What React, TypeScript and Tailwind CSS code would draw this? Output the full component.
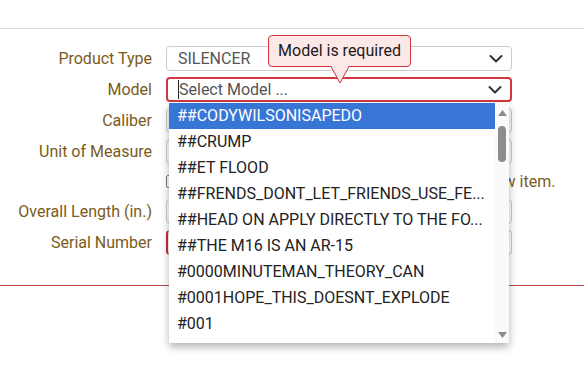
import React from "react";

const Chevron = () => (
  <svg width="14" height="9" viewBox="0 0 14 9" className="absolute right-[8px] top-1/2 -translate-y-1/2">
    <path d="M1.5 1.5 L7 7 L12.5 1.5" fill="none" stroke="#333" strokeWidth="2" strokeLinecap="round" strokeLinejoin="round" />
  </svg>
);

const Label = ({ children }: { children: React.ReactNode }) => (
  <div className="text-right text-[16px] leading-[25px] text-[#7a5b1c] whitespace-nowrap">{children}</div>
);

const items = [
  "##CODYWILSONISAPEDO",
  "##CRUMP",
  "##ET FLOOD",
  "##FRENDS_DONT_LET_FRIENDS_USE_FE...",
  "##HEAD ON APPLY DIRECTLY TO THE FO...",
  "##THE M16 IS AN AR-15",
  "#0000MINUTEMAN_THEORY_CAN",
  "#0001HOPE_THIS_DOESNT_EXPLODE",
  "#001",
];

export default function App() {
  return (
    <div className="relative w-[584px] h-[381px] bg-white overflow-hidden font-['Roboto',sans-serif]">
      <div className="h-[29px] border-b border-[#dedede]" />
      <div className="pt-[17px] grid grid-cols-[152px_346px] gap-x-[14px] gap-y-[6px]">
        <Label>Product Type</Label>
        <div className="relative h-[25px] border border-[#ccc] rounded-[4px] pl-[11px] text-[16px] leading-[23px] text-[#555]">
          SILENCER
          <Chevron />
        </div>

        <Label>Model</Label>
        <div className="relative h-[25px] border-2 border-[#d2363f] rounded-[4px] pl-[10px] text-[16px] leading-[21px] text-[#555]">
          <span className="border-l border-[#222]">Select Model ...</span>
          <Chevron />
        </div>

        <Label>Caliber</Label>
        <div className="relative h-[25px] border border-[#ccc] rounded-[4px]" />

        <Label>Unit of Measure</Label>
        <div className="relative h-[25px] border border-[#ccc] rounded-[4px]" />

        <div />
        <div className="h-[23px] flex items-center gap-[6px] text-[16px] text-[#7a5b1c] whitespace-nowrap">
          <span className="w-[12px] h-[13px] border border-[#777] rounded-[2px] bg-white shrink-0" />
          <span>Check this box if it's not in the list to add a new item.</span>
        </div>

        <Label>Overall Length (in.)</Label>
        <div className="relative h-[25px] border border-[#ccc] rounded-[4px]" />

        <Label>Serial Number</Label>
        <div className="relative h-[25px] border border-[#ccc] border-l-2 border-l-[#c9302c] rounded-[4px]" />
      </div>
      <div className="mt-[30px] border-b border-[#b94a48]" />

      {/* tooltip */}
      <div className="absolute left-[268px] top-[35px] w-[143px] h-[32px] bg-[#fde8e8] border border-[#d2363f] rounded-[4px] text-[16px] leading-[30px] text-center text-[#1a1a1a]">
        Model is required
      </div>
      <svg className="absolute left-[330px] top-[66px]" width="22" height="20" viewBox="0 0 22 20">
        <path d="M1 0.5 L10 17 L19 0.5" fill="#fde8e8" stroke="#d2363f" strokeWidth="1" />
        <rect x="2" y="0" width="16" height="1.2" fill="#fde8e8" />
      </svg>

      {/* dropdown */}
      <div className="absolute left-[169px] top-[103px] w-[340px] h-[240px] bg-white shadow-[0_4px_8px_rgba(0,0,0,0.3)] flex">
        <div className="flex-1 overflow-hidden">
          {items.map((it, i) => (
            <div
              key={it}
              className={`h-[26px] pl-[8px] text-[16px] leading-[26px] whitespace-nowrap ${
                i === 0 ? "bg-[#3876d6] text-white" : "text-[#222]"
              }`}
            >
              {it}
            </div>
          ))}
        </div>
        <div className="relative w-[14px] bg-[#fafafa]">
          <svg className="absolute left-[3px] top-[7px]" width="9" height="6" viewBox="0 0 9 6">
            <path d="M0 6 L4.5 0 L9 6 Z" fill="#8a8a8a" />
          </svg>
          <div className="absolute left-[3px] top-[23px] w-[8px] h-[36px] rounded-full bg-[#8c8c8c]" />
          <svg className="absolute left-[3px] bottom-[5px]" width="9" height="6" viewBox="0 0 9 6">
            <path d="M0 0 L4.5 6 L9 0 Z" fill="#8a8a8a" />
          </svg>
        </div>
      </div>
    </div>
  );
}
